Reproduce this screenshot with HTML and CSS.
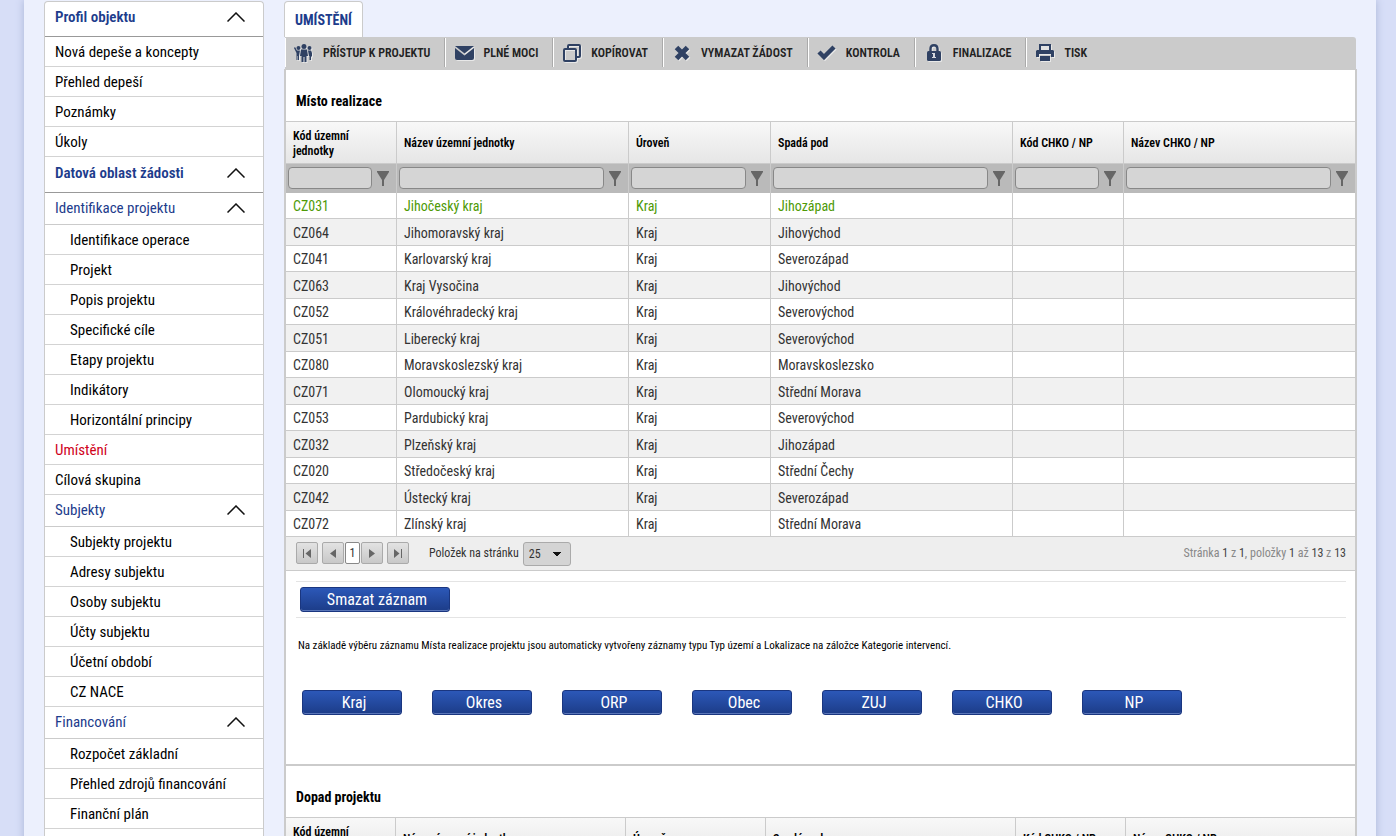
FILE: index.html
```html
<!DOCTYPE html>
<html lang="cs">
<head>
<meta charset="utf-8">
<title>Umístění</title>
<link rel="stylesheet" href="styles.css">
</head>
<body>
<svg class="defs" aria-hidden="true">
  <symbol id="chev" viewBox="0 0 18 10"><path d="M0.500 9.500L9 1L17.500 9.500" fill="none" stroke="#111" stroke-width="1.500"/></symbol>
  <symbol id="funnel" viewBox="0 0 12 15"><path d="M0 0H12V1L7 9V15H5V9L0 1Z" fill="#666"/></symbol>
</svg>
<div class="page">
  <nav class="side" aria-label="Navigace">
    <button class="head">Profil objektu<svg class="chev"><use href="#chev"/></svg></button>
    <a class="item" href="#">Nová depeše a koncepty</a>
    <a class="item" href="#">Přehled depeší</a>
    <a class="item" href="#">Poznámky</a>
    <a class="item" href="#">Úkoly</a>
    <button class="head">Datová oblast žádosti<svg class="chev"><use href="#chev"/></svg></button>
    <button class="group">Identifikace projektu<svg class="chev"><use href="#chev"/></svg></button>
    <a class="item sub" href="#">Identifikace operace</a>
    <a class="item sub" href="#">Projekt</a>
    <a class="item sub" href="#">Popis projektu</a>
    <a class="item sub" href="#">Specifické cíle</a>
    <a class="item sub" href="#">Etapy projektu</a>
    <a class="item sub" href="#">Indikátory</a>
    <a class="item sub" href="#">Horizontální principy</a>
    <a class="item current" href="#">Umístění</a>
    <a class="item" href="#">Cílová skupina</a>
    <button class="group">Subjekty<svg class="chev"><use href="#chev"/></svg></button>
    <a class="item sub" href="#">Subjekty projektu</a>
    <a class="item sub" href="#">Adresy subjektu</a>
    <a class="item sub" href="#">Osoby subjektu</a>
    <a class="item sub" href="#">Účty subjektu</a>
    <a class="item sub" href="#">Účetní období</a>
    <a class="item sub" href="#">CZ NACE</a>
    <button class="group">Financování<svg class="chev"><use href="#chev"/></svg></button>
    <a class="item sub" href="#">Rozpočet základní</a>
    <a class="item sub" href="#">Přehled zdrojů financování</a>
    <a class="item sub" href="#">Finanční plán</a>
  </nav>
  <main class="main">
    <div class="tabs"><a class="tab" href="#">UMÍSTĚNÍ</a></div>
    <div class="toolbar">
      <button class="tool"><span class="ico"><svg width="20" height="18" viewBox="0 0 20 18"><g fill="#2f4163"><circle cx="10" cy="2.500" r="2.500"/><circle cx="4.500" cy="4" r="2"/><circle cx="15.500" cy="4" r="2"/><path d="M7 5.500H13L14 12H12.500V18H10.500V13H9.500V18H7.500V12H6Z"/><path d="M1 3L3 6.500H6L5 12V16H4V12H3.500V16H2.500V9L0 4Z"/><path d="M14 6.500H17L18 9V12L17 13V16H16V12H15.500V16H15V12Z"/></g></svg></span>PŘÍSTUP K PROJEKTU</button>
      <button class="tool"><span class="ico"><svg width="19" height="14" viewBox="0 0 19 14"><path d="M0 0H19L9.500 7.500Z" fill="#2f4163"/><path d="M0 2L9.500 9.500L19 2V12Q19 14 17 14H2Q0 14 0 12Z" fill="#2f4163"/></svg></span>PLNÉ MOCI</button>
      <button class="tool"><span class="ico"><svg width="18" height="18" viewBox="0 0 18 18"><g fill="none" stroke="#2f4163" stroke-width="2"><path d="M5 4V2Q5 1 6 1H16Q17 1 17 2V12Q17 13 16 13H14"/><rect x="1" y="5" width="12" height="12" rx="1"/></g></svg></span>KOPÍROVAT</button>
      <button class="tool"><span class="ico"><svg width="16" height="16" viewBox="0 0 16 16"><path d="M2.500 2.500L13.500 13.500M13.500 2.500L2.500 13.500" stroke="#2f4163" stroke-width="5"/></svg></span>VYMAZAT ŽÁDOST</button>
      <button class="tool"><span class="ico"><svg width="19" height="15" viewBox="0 0 19 15"><path d="M2 7L7 12L17 2" fill="none" stroke="#2f4163" stroke-width="4.500"/></svg></span>KONTROLA</button>
      <button class="tool"><span class="ico"><svg width="14" height="17" viewBox="0 0 14 17"><path d="M3.500 8V5Q3.500 1.200 7 1.200T10.500 5V8" fill="none" stroke="#2f4163" stroke-width="2.400"/><rect y="7" width="14" height="10" rx="1.500" fill="#2f4163"/><path d="M5 9H8V13H9V14H5V13H6V10H5Z" fill="#d5d8df"/></svg></span>FINALIZACE</button>
      <button class="tool last"><span class="ico"><svg width="18" height="18" viewBox="0 0 18 18"><path d="M4 6V1H14V6" fill="#e2e2e2" stroke="#2f4163" stroke-width="2"/><path d="M1 6H17L18 7V13H15V10H3V13H0V7Z" fill="#2f4163"/><rect x="4" y="12" width="10" height="5" fill="#2f4163"/></svg></span>TISK</button>
    </div>
    <section class="panel">
      <h2>Místo realizace</h2>
      <table class="grid">
        <colgroup><col class="c1"><col class="c2"><col class="c3"><col class="c4"><col class="c5"><col></colgroup>
        <thead>
          <tr><th>Kód územní jednotky</th><th>Název územní jednotky</th><th>Úroveň</th><th>Spadá pod</th><th>Kód CHKO / NP</th><th>Název CHKO / NP</th></tr>
          <tr class="filters">
            <td><div class="filter"><input type="text" aria-label="Filtr kód územní jednotky"><svg><use href="#funnel"/></svg></div></td>
            <td><div class="filter"><input type="text" aria-label="Filtr název územní jednotky"><svg><use href="#funnel"/></svg></div></td>
            <td><div class="filter"><input type="text" aria-label="Filtr úroveň"><svg><use href="#funnel"/></svg></div></td>
            <td><div class="filter"><input type="text" aria-label="Filtr spadá pod"><svg><use href="#funnel"/></svg></div></td>
            <td><div class="filter"><input type="text" aria-label="Filtr kód CHKO / NP"><svg><use href="#funnel"/></svg></div></td>
            <td><div class="filter"><input type="text" aria-label="Filtr název CHKO / NP"><svg><use href="#funnel"/></svg></div></td>
          </tr>
        </thead>
        <tbody>
          <tr class="selected"><td>CZ031</td><td>Jihočeský kraj</td><td>Kraj</td><td>Jihozápad</td><td></td><td></td></tr>
          <tr><td>CZ064</td><td>Jihomoravský kraj</td><td>Kraj</td><td>Jihovýchod</td><td></td><td></td></tr>
          <tr><td>CZ041</td><td>Karlovarský kraj</td><td>Kraj</td><td>Severozápad</td><td></td><td></td></tr>
          <tr><td>CZ063</td><td>Kraj Vysočina</td><td>Kraj</td><td>Jihovýchod</td><td></td><td></td></tr>
          <tr><td>CZ052</td><td>Královéhradecký kraj</td><td>Kraj</td><td>Severovýchod</td><td></td><td></td></tr>
          <tr><td>CZ051</td><td>Liberecký kraj</td><td>Kraj</td><td>Severovýchod</td><td></td><td></td></tr>
          <tr><td>CZ080</td><td>Moravskoslezský kraj</td><td>Kraj</td><td>Moravskoslezsko</td><td></td><td></td></tr>
          <tr><td>CZ071</td><td>Olomoucký kraj</td><td>Kraj</td><td>Střední Morava</td><td></td><td></td></tr>
          <tr><td>CZ053</td><td>Pardubický kraj</td><td>Kraj</td><td>Severovýchod</td><td></td><td></td></tr>
          <tr><td>CZ032</td><td>Plzeňský kraj</td><td>Kraj</td><td>Jihozápad</td><td></td><td></td></tr>
          <tr><td>CZ020</td><td>Středočeský kraj</td><td>Kraj</td><td>Střední Čechy</td><td></td><td></td></tr>
          <tr><td>CZ042</td><td>Ústecký kraj</td><td>Kraj</td><td>Severozápad</td><td></td><td></td></tr>
          <tr><td>CZ072</td><td>Zlínský kraj</td><td>Kraj</td><td>Střední Morava</td><td></td><td></td></tr>
        </tbody>
      </table>
      <div class="pager">
        <button class="pg" aria-label="První"><svg width="8" height="9" viewBox="0 0 8 9"><path d="M0 0H1V9H0ZM8 0V9L2.500 4.500Z" fill="#666"/></svg></button>
        <div class="pages">
          <button class="pg" aria-label="Předchozí"><svg width="6" height="9" viewBox="0 0 6 9"><path d="M6 0V9L0 4.500Z" fill="#666"/></svg></button>
          <a class="num" href="#">1</a>
          <button class="pg" aria-label="Další"><svg width="6" height="9" viewBox="0 0 6 9"><path d="M0 0V9L6 4.500Z" fill="#666"/></svg></button>
        </div>
        <button class="pg" aria-label="Poslední"><svg width="8" height="9" viewBox="0 0 8 9"><path d="M7 0H8V9H7ZM0 0V9L5.500 4.500Z" fill="#666"/></svg></button>
        <label class="size" for="size">Položek na stránku</label>
        <select id="size"><option>25</option></select>
        <span class="info">Stránka <b>1</b> z <b>1</b>, položky <b>1</b> až <b>13</b> z <b>13</b></span>
      </div>
      <div class="actions"><button class="blue wide">Smazat záznam</button></div>
      <p class="note">Na základě výběru záznamu Místa realizace projektu jsou automaticky vytvořeny záznamy typu Typ území a Lokalizace na záložce Kategorie intervencí.</p>
      <div class="choices">
        <button class="blue">Kraj</button>
        <button class="blue">Okres</button>
        <button class="blue">ORP</button>
        <button class="blue">Obec</button>
        <button class="blue">ZUJ</button>
        <button class="blue">CHKO</button>
        <button class="blue">NP</button>
      </div>
    </section>
    <section class="panel">
      <h2>Dopad projektu</h2>
      <table class="grid">
        <colgroup><col class="d1"><col class="d2"><col class="d3"><col class="d4"><col class="d5"><col></colgroup>
        <thead>
          <tr><th>Kód územní jednotky</th><th>Název územní jednotky</th><th>Úroveň</th><th>Spadá pod</th><th>Kód CHKO / NP</th><th>Název CHKO / NP</th></tr>
        </thead>
      </table>
    </section>
  </main>
</div>
</body>
</html>
```
FILE: styles.css
```css
* { box-sizing: border-box; }
body {
  margin: 0;
  background: #d7def7;
  color: #000;
  font-family: "Roboto Condensed", "Liberation Sans Narrow", Roboto, sans-serif;
  font-size: 15px;
}
button, input, select { font: inherit; color: inherit; margin: 0; }
button { cursor: pointer; }
a { color: inherit; text-decoration: none; }
.defs { display: none; }
.page {
  display: flex;
  margin: 0 20px 0 24px;
  min-height: 100vh;
  padding: 1px 19px 0 20px;
  gap: 20px;
  background: #ecf0fd;
  box-shadow: 0 0 8px #a9b5d6;
}

.side {
  width: 220px;
  flex: none;
  display: flex;
  flex-direction: column;
  border: 1px solid #cbcbcb;
  border-bottom: 0;
  border-radius: 4px 4px 0 0;
  background: #fff;
}
.head, .group {
  display: flex;
  align-items: center;
  justify-content: space-between;
  border: 0;
  background: none;
  padding: 0 18px 0 10px;
  color: #1d3c8c;
  text-align: left;
}
.head {
  height: 36px;
  padding-bottom: 3px;
  border-bottom: 1px solid #999;
  font-weight: 600;
}
.head:first-child { height: 35px; padding-bottom: 4px; }
.group { height: 32px; padding-bottom: 1px; border-bottom: 1px solid #cbcbcb; }
.chev { width: 18px; height: 10px; }
.item {
  height: 30px;
  padding-top: 1px;
  line-height: 28px;
  padding-left: 10px;
  border-bottom: 1px solid #d3d3d3;
  white-space: nowrap;
}
.sub { padding-left: 25px; }
.current { color: #d0021b; }

.main { flex: 1; min-width: 0; }
.tabs { display: flex; }
.tab {
  height: 36px;
  line-height: 36px;
  padding: 0 10px;
  border: 1px solid #cbcbcb;
  border-bottom: 0;
  border-radius: 4px 4px 0 0;
  background: #fff;
  color: #1d3c8c;
  font-size: 14px;
  font-weight: 700;
}
.toolbar {
  display: flex;
  height: 32px;
  margin: 0 1px;
  padding: 1px 0 2px;
  background: #cbcbcb;
  border-radius: 0 3px 0 0;
}
.tool {
  display: flex;
  align-items: center;
  gap: 9px;
  padding: 0 14px 0 8px;
  border: 0;
  border-left: 1px solid #fff;
  border-right: 1px solid #aaa;
  background: none;
  color: #222;
  font-size: 12px;
  font-weight: 600;
  white-space: nowrap;
}
.last { border-right: 0; }
.ico { width: 20px; display: flex; justify-content: center; }
.ico svg { filter: drop-shadow(1px 1px 0 #e8e8e8); }

.panel {
  border: 2px solid #cbcbcb;
  border-top-width: 1px;
  border-bottom-width: 1px;
  background: #fff;
}
h2 {
  margin: 0;
  padding: 0 10px;
  height: 51px;
  line-height: 62px;
  font-size: 14px;
  font-weight: 700;
}
.grid {
  width: 100%;
  table-layout: fixed;
  border-collapse: separate;
  border-spacing: 0;
  color: #333;
  font-size: 14px;
}
.c1, .c5 { width: 111px; }
.c2 { width: 232px; }
.c3 { width: 142px; }
.c4 { width: 242px; }
.d1, .d5 { width: 110px; }
.d2 { width: 230px; }
.d3 { width: 140px; }
.d4 { width: 250px; }
.grid th {
  height: 43px;
  padding: 2px 7px 0;
  border-top: 1px solid #cbcbcb;
  border-bottom: 1px solid #cbcbcb;
  border-right: 1px solid #cbcbcb;
  background: linear-gradient(#f8f8f8, #e6e6e6);
  color: #000;
  font-size: 12px;
  font-weight: 600;
  line-height: 15px;
  text-align: left;
  vertical-align: middle;
}
.grid th:first-child { padding-right: 40px; }
.grid td {
  height: 26px;
  padding: 0 7px;
  border-right: 1px solid #cbcbcb;
  border-bottom: 1px solid #cbcbcb;
  line-height: 20px;
}
.grid tr > :last-child { border-right: 0; }
.grid tbody tr:nth-child(even) td { height: 27px; padding-top: 1px; background: #f1f1f1; }
.grid .selected { color: #4e9a06; }
.grid .filters td { height: 29px; padding: 0 7px 1px 2px; background: #bababa; border-bottom: 0; }
.filter { display: flex; align-items: center; gap: 5px; }
.filter input {
  flex: 1;
  min-width: 0;
  height: 22px;
  padding: 0 4px;
  border: 1px solid #888;
  border-radius: 4px;
  background: #d5d5d5;
}
.filter svg { width: 12px; height: 15px; flex: none; }

.pager {
  display: flex;
  align-items: flex-start;
  height: 34px;
  padding: 5px 9px 0 10px;
  gap: 4px;
  border-bottom: 1px solid #cbcbcb;
  background: #eee;
  color: #333;
  font-size: 12px;
  line-height: 22px;
}
.pg {
  display: flex;
  align-items: center;
  justify-content: center;
  width: 22px;
  height: 22px;
  padding: 0;
  border: 1px solid #aaa;
  border-radius: 2px;
  background: linear-gradient(#e2e2e2, #c8c8c8);
}
.pages { display: flex; gap: 1px; }
.num {
  width: 15px;
  height: 22px;
  line-height: 20px;
  border: 1px solid #888;
  border-radius: 2px;
  background: #fff;
  text-align: center;
}
.size { margin-left: 16px; }
select {
  appearance: none;
  width: 48px;
  height: 24px;
  padding: 0 5px 2px;
  border: 1px solid #aaa;
  border-radius: 3px;
  background: linear-gradient(45deg, transparent 50%, #111 50%) 29px 9px / 4px 4px no-repeat,
    linear-gradient(315deg, transparent 50%, #111 50%) 33px 9px / 4px 4px no-repeat, #d4d4d4;
}
.info { margin-left: auto; color: #888; }
.info b { color: #444; font-weight: 400; }

.actions {
  margin: 10px 9px 0 10px;
  padding: 5px 4px;
  border-top: 1px solid #e4e4e4;
  border-bottom: 1px solid #e4e4e4;
}
.blue {
  display: block;
  width: 100px;
  height: 25px;
  padding: 0 0 0 4px;
  border: 1px solid #1a3680;
  border-radius: 3px;
  background: linear-gradient(#2c58b8, #1c3c88);
  box-shadow: inset 0 -1px 0 #5a76b8;
  color: #fff;
  font-size: 16px;
  line-height: 23px;
}
.wide { width: 150px; }
.note { margin: 20px 12px 0; font-size: 11px; line-height: 16px; }
.choices { display: flex; gap: 30px; padding: 36px 16px 49px; }
```
